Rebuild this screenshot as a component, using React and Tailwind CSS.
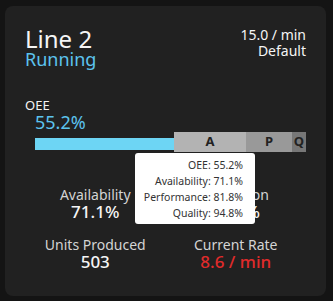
import React from "react";

const stats = [
  { label: "Availability", value: "71.1%", color: "text-[#f5f5f5]" },
  { label: "Utilization", value: "81.8%", color: "text-[#f5f5f5]" },
  { label: "Units Produced", value: "503", color: "text-[#f5f5f5]" },
  { label: "Current Rate", value: "8.6 / min", color: "text-[#e02b2b]" },
];

const App = () => {
  return (
    <div className="w-[333px] h-[301px] bg-[#141414] pt-[6px] pl-[5px] font-['Noto_Sans',sans-serif]">
      <div className="relative w-[321px] h-[290px] rounded-[8px] bg-[#212121] px-5 pt-[21px]">
        {/* header */}
        <div className="flex justify-between items-start">
          <div>
            <div className="text-[24px] leading-[24px] text-[#f5f5f5]">Line 2</div>
            <div className="text-[18px] leading-[16px] text-[#5cc3ee]">Running</div>
          </div>
          <div className="text-right text-[14px] leading-4 text-[#f5f5f5]">
            <div>15.0 / min</div>
            <div>Default</div>
          </div>
        </div>

        {/* OEE */}
        <div className="mt-[30px]">
          <div className="text-[13px] leading-4 text-[#f5f5f5]">OEE</div>
          <div className="pl-[10px] text-[18px] leading-[19px] text-[#5cc3ee]">55.2%</div>
          <div className="ml-[10px] flex items-end h-[20px]">
            <div className="w-[139px] h-[12px] mb-[2px] bg-[#6dd5f4]" />
            <div className="w-[72px] h-full flex items-center justify-center bg-[#b3b3b3] text-[13px] font-bold text-[#222]">A</div>
            <div className="w-[46px] h-full flex items-center justify-center bg-[#999999] text-[13px] font-bold text-[#222]">P</div>
            <div className="flex-1 h-full flex items-center justify-center bg-[#777777] text-[13px] font-bold text-[#222]">Q</div>
          </div>
        </div>

        {/* stats */}
        <div className="mt-[35px] grid grid-cols-2 gap-y-[16px] text-center">
          {stats.map((s) => (
            <div key={s.label}>
              <div className="text-[14px] leading-4 text-[#d4d4d4]">{s.label}</div>
              <div className={`text-[17px] leading-[18px] font-medium ${s.color}`}>{s.value}</div>
            </div>
          ))}
        </div>

        {/* tooltip */}
        <div className="absolute left-[130px] top-[147px] w-[120px] h-[71px] rounded-[3px] bg-white pr-[12px] pt-[4px] text-right text-[10.5px] leading-4 text-[#333]">
          <div>OEE: 55.2%</div>
          <div>Availability: 71.1%</div>
          <div>Performance: 81.8%</div>
          <div>Quality: 94.8%</div>
        </div>
      </div>
    </div>
  );
};

export default App;
